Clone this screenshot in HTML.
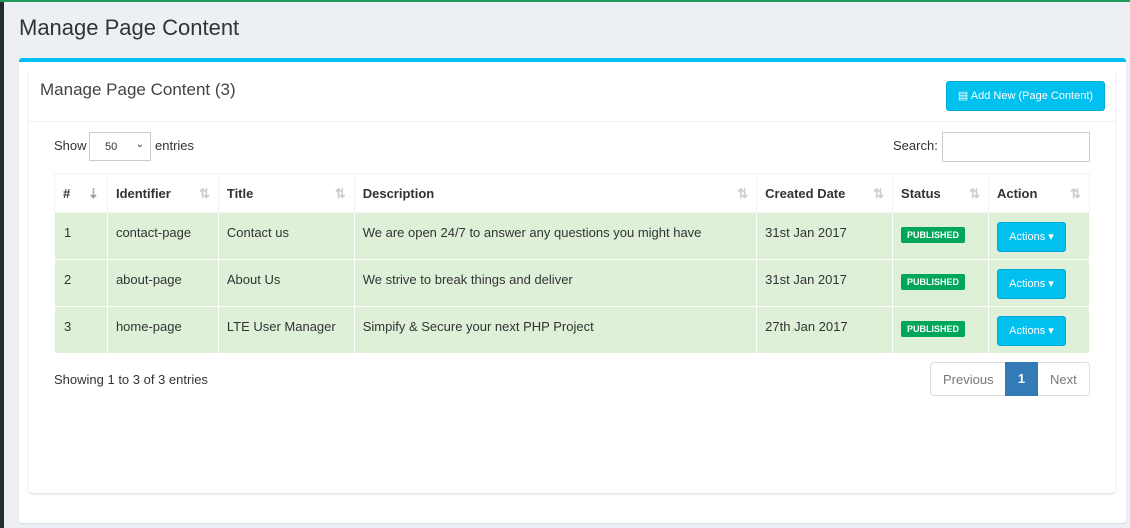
<!DOCTYPE html>
<html><head><meta charset="utf-8"><style>
*{box-sizing:border-box;margin:0;padding:0}
body{width:1130px;height:528px;background:#ecf0f5;font-family:"Liberation Sans",sans-serif;color:#333;position:relative;overflow:hidden;font-size:13px}
.abs{position:absolute}
tbody td{vertical-align:top;padding-top:12px;border:1px solid #fff;padding-left:8px}
.bd{display:inline-block;background:#00a65a;color:#fff;font-size:9px;font-weight:bold;padding:3px 6px;border-radius:2px;margin-top:2px}
.ac{display:inline-block;background:#00c0ef;border:1px solid #00acd6;color:#fff;font-size:11px;width:69px;height:30px;line-height:28px;text-align:center;border-radius:3px;margin-top:-3px}
</style></head><body>
<div class="abs" style="left:0;top:0;width:4px;height:528px;background:#222d32"></div>
<div class="abs" style="left:0;top:0;width:1130px;height:2px;background:#1f9a5c"></div>
<div class="abs" style="left:19px;top:15px;font-size:22px;color:#333">Manage Page Content</div>
<div class="abs" style="left:19px;top:58px;width:1107px;height:465px;background:#fff;border-top:4px solid #00c0ef;border-radius:3px;box-shadow:0 1px 1px rgba(0,0,0,.1)"></div>
<div class="abs" style="left:29px;top:70px;width:1086px;height:423px;background:#fff;box-shadow:0 1px 2px rgba(0,0,0,.15);border-radius:3px"></div>
<div class="abs" style="left:29px;top:121px;width:1086px;height:1px;background:#f0f0f0"></div>
<div class="abs" style="left:40px;top:80px;font-size:17px;color:#444">Manage Page Content (3)</div>
<div class="abs" style="left:946px;top:81px;width:159px;height:30px;background:#00c0ef;border:1px solid #00acd6;border-radius:3px;color:#fff;font-size:11px;line-height:28px;text-align:center">&#9636; Add New (Page Content)</div>
<div class="abs" style="left:54px;top:138px">Show</div>
<div class="abs" style="left:89px;top:132px;width:62px;height:29px;border:1px solid #ccc;font-size:11px;padding:8px 0 0 15px">50<span style="position:absolute;right:6px;top:6px;font-size:10px">&#8964;</span></div>
<div class="abs" style="left:155px;top:138px">entries</div>
<div class="abs" style="left:893px;top:138px">Search:</div>
<div class="abs" style="left:942px;top:132px;width:148px;height:30px;border:1px solid #ccc"></div>
<table class="abs" style="left:54px;top:173px;width:1036px;border-collapse:collapse;font-size:13px">
<colgroup><col style="width:53px"><col style="width:111px"><col style="width:136px"><col style="width:403px"><col style="width:136px"><col style="width:96px"><col style="width:101px"></colgroup>
<tr style="height:39px;font-weight:bold">
<td style="border:1px solid #f4f4f4;padding-left:8px">#<span style="float:right;margin-right:8px;color:#999">&#8675;</span></td>
<td style="border:1px solid #f4f4f4;padding-left:8px">Identifier<span style="float:right;margin-right:8px;color:#ccc">&#8645;</span></td>
<td style="border:1px solid #f4f4f4;padding-left:8px">Title<span style="float:right;margin-right:8px;color:#ccc">&#8645;</span></td>
<td style="border:1px solid #f4f4f4;padding-left:8px">Description<span style="float:right;margin-right:8px;color:#ccc">&#8645;</span></td>
<td style="border:1px solid #f4f4f4;padding-left:8px">Created Date<span style="float:right;margin-right:8px;color:#ccc">&#8645;</span></td>
<td style="border:1px solid #f4f4f4;padding-left:8px">Status<span style="float:right;margin-right:8px;color:#ccc">&#8645;</span></td>
<td style="border:1px solid #f4f4f4;padding-left:8px">Action<span style="float:right;margin-right:8px;color:#ccc">&#8645;</span></td>
</tr>
<tbody style="background:#dff0d8">
<tr style="height:47px"><td style="padding-left:9px">1</td><td>contact-page</td><td>Contact us</td><td>We are open 24/7 to answer any questions you might have</td><td>31st Jan 2017</td><td><span class="bd">PUBLISHED</span></td><td><span class="ac">Actions &#9662;</span></td></tr>
<tr style="height:47px"><td style="padding-left:9px">2</td><td>about-page</td><td>About Us</td><td>We strive to break things and deliver</td><td>31st Jan 2017</td><td><span class="bd">PUBLISHED</span></td><td><span class="ac">Actions &#9662;</span></td></tr>
<tr style="height:47px"><td style="padding-left:9px">3</td><td>home-page</td><td>LTE User Manager</td><td>Simpify &amp; Secure your next PHP Project</td><td>27th Jan 2017</td><td><span class="bd">PUBLISHED</span></td><td><span class="ac">Actions &#9662;</span></td></tr>
</tbody></table>
<div class="abs" style="left:54px;top:372px">Showing 1 to 3 of 3 entries</div>
<div class="abs" style="left:930px;top:362px;width:160px;height:34px;border:1px solid #ddd;border-radius:4px;color:#777;font-size:13px">
<span class="abs" style="left:12px;top:9px">Previous</span>
<span class="abs" style="left:74px;top:-1px;width:33px;height:34px;background:#337ab7;color:#fff;text-align:center;line-height:34px;font-weight:bold">1</span>
<span class="abs" style="left:119px;top:9px">Next</span>
</div>
</body></html>
